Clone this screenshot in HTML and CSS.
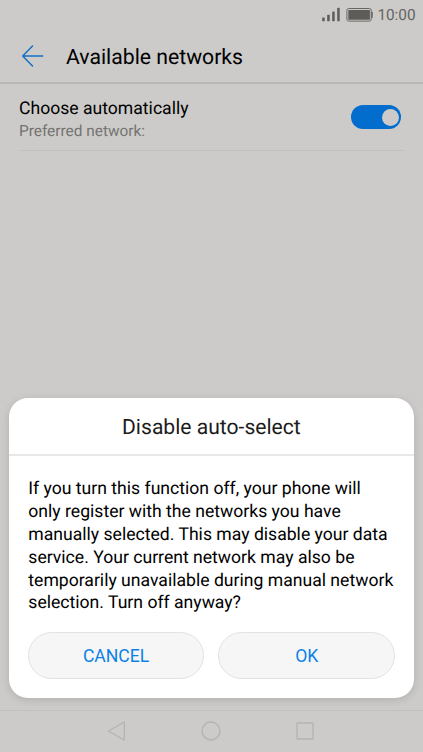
FILE: index.html
```html
<!DOCTYPE html>
<html lang="en">
<head>
<meta charset="utf-8">
<title>Available networks</title>
<link rel="stylesheet" href="styles.css">
</head>
<body>
<div class="phone">
  <div class="status">
    <svg class="status-icons" width="51" height="16" viewBox="0 0 51 16">
      <g fill="#5d5c58"><rect x=".2" y="10.5" width="2.5" height="3.8" rx=".6"/><rect x="5.2" y="7.7" width="2.5" height="6.6" rx=".6"/><rect x="10.2" y="4.5" width="2.5" height="9.8" rx=".6"/><rect x="15.2" y=".7" width="2.5" height="13.6" rx=".6"/><rect x="26.3" y="3" width="21.6" height="9.8" rx=".6"/><path d="M49.3 4.8h.6q.8 0 .8.8v4.6q0 .8-.8.8h-.6z"/></g>
      <rect x="24.9" y="1.5" width="24.3" height="12.6" rx="1.8" fill="none" stroke="#686763" stroke-width="1"/>
    </svg>
    <span class="clock">10:00</span>
  </div>
  <header class="header">
    <svg class="back" width="22" height="22" viewBox="0 0 22 22" fill="none" stroke="#1470c4" stroke-width="1.5" stroke-linecap="round" stroke-linejoin="round"><path d="M10.5 1 .7 11l9.8 10M.7 11h20"/></svg>
    <h1 class="title">Available networks</h1>
  </header>
  <main class="content">
    <div class="setting">
      <div class="labels">
        <div class="name">Choose automatically</div>
        <div class="detail">Preferred network:</div>
      </div>
      <div class="switch"><div class="thumb"></div></div>
    </div>
  </main>
  <section class="dialog">
    <h2 class="dialog-title">Disable auto-select</h2>
    <p class="message">If you turn this function off, your phone will<br>only register with the networks you have<br>manually selected. This may disable your data<br>service. Your current network may also be<br>temporarily unavailable during manual network<br>selection. Turn off anyway?</p>
    <div class="actions">
      <button class="button">CANCEL</button>
      <button class="button">OK</button>
    </div>
  </section>
  <nav class="nav">
    <svg width="20" height="20" viewBox="0 0 20 20"><path d="M17.3 1v18L1.5 10z"/></svg>
    <svg width="20" height="20" viewBox="0 0 20 20"><circle cx="10" cy="10" r="9"/></svg>
    <svg width="20" height="20" viewBox="0 0 20 20"><rect x="2" y="2" width="16" height="16" rx=".5"/></svg>
  </nav>
</div>
</body>
</html>
```
FILE: styles.css
```css
* { box-sizing: border-box; }
body { margin: 0; font-family: Roboto, sans-serif; color: #000; text-rendering: geometricPrecision; }
h1, h2, p { margin: 0; font-weight: 400; }
.phone { width: 423px; height: 752px; overflow: hidden; display: flex; flex-direction: column; background: #cccbc9; }
.status { height: 30px; flex: none; display: flex; align-items: center; justify-content: flex-end; padding-right: 7.5px; }
.status-icons { margin-right: 4.5px; }
.clock { font-size: 15.4px; letter-spacing: -.05px; line-height: 18px; padding-bottom: 1px; color: #666561; white-space: nowrap; }
.header { height: 54px; flex: none; display: flex; align-items: center; padding-left: 21.5px; border-bottom: 2px solid #b9b8b6; }
.back { margin-right: 22.5px; }
.title { padding-top: 4px; font-size: 21.2px; line-height: 26px; white-space: nowrap; }
.content { flex: 1; min-height: 0; padding: 0 19px; }
.setting { height: 67px; display: flex; justify-content: space-between; align-items: center; border-bottom: 1px solid #c1c0be; padding-right: 3px; }
.labels { padding-top: 5px; }
.name { font-size: 17.6px; line-height: 23px; }
.detail { font-size: 15.4px; line-height: 21px; color: #747371; }
.switch { width: 50px; height: 24px; border-radius: 12px; background: #026dcd; display: flex; justify-content: flex-end; align-items: center; padding-right: 2.5px; }
.thumb { width: 17px; height: 17px; border-radius: 50%; background: #cccbc9; }
.dialog { flex: none; height: 300px; margin: 0 9.5px 12px 9.3px; border-radius: 19px; background: #fff; box-shadow: 0 2px 9px rgba(0, 0, 0, .13); }
.dialog-title { height: 58px; padding-top: 1px; border-bottom: 2px solid #e8e8e8; text-align: center; font-size: 21.1px; line-height: 58px; color: #1c1c1c; }
.message { height: 136.8px; margin-top: 22.4px; padding-left: 19px; font-size: 17.6px; line-height: 22.8px; white-space: nowrap; }
.actions { display: flex; gap: 14px; padding: 16.8px 18.5px 0; }
.button { flex: 1; height: 47px; padding: 2px 0 0; border: 1px solid #e2e2e2; border-radius: 24px; background: #f6f6f7; color: #0c82e6; font: 17.6px Roboto, sans-serif; }
.nav { flex: none; height: 42px; display: flex; justify-content: center; align-items: center; gap: 74px; padding: 0 1px 1px 0; border-top: 1px solid #c1c0be; }
.nav svg { fill: none; stroke: #b5b4b2; stroke-width: 1.4; stroke-linejoin: round; }
```
